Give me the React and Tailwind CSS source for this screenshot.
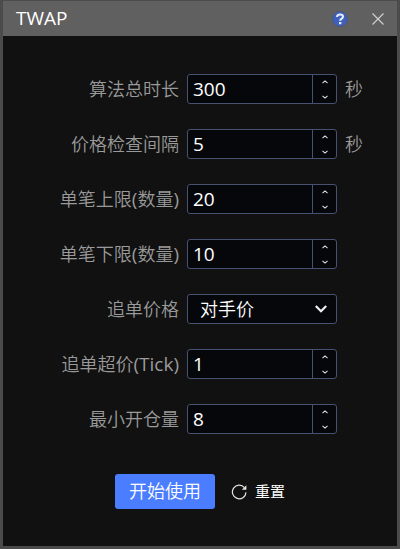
import { useState } from "react";

const fields = [
  { id: "duration", label: "算法总时长", value: 300, unit: "秒" },
  { id: "interval", label: "价格检查间隔", value: 5, unit: "秒" },
  { id: "maxQty", label: "单笔上限(数量)", value: 20 },
  { id: "minQty", label: "单笔下限(数量)", value: 10 },
  { id: "chasePrice", label: "追单价格", options: ["对手价", "最新价", "排队价"] },
  { id: "chaseTick", label: "追单超价(Tick)", value: 1 },
  { id: "minOpen", label: "最小开仓量", value: 8 },
];

const initialValues = Object.fromEntries(
  fields.map((f) => [f.id, f.options ? f.options[0] : f.value])
);

// Latin letters and brackets keep the regular weight, Chinese is set lighter
function LabelText({ text }) {
  return text.split(/([A-Za-z()]+)/).map((part, i) =>
    i % 2 ? (
      <span key={i} className="text-[19px] font-normal">
        {part}
      </span>
    ) : (
      part
    )
  );
}

function StepButton({ label, down, onClick }) {
  return (
    <button
      type="button"
      aria-label={label}
      onClick={onClick}
      className="flex flex-1 items-center justify-center text-[#e4e4e4]"
    >
      <svg className="h-1 w-1.5" viewBox="0 0 6 4" fill="none" stroke="currentColor" strokeWidth="1.1">
        <path d={down ? "M0.5 0.8 3 3.1 5.5 0.8" : "M0.5 3.2 3 0.9 5.5 3.2"} />
      </svg>
    </button>
  );
}

function NumberField({ id, value, onChange }) {
  return (
    <div className="flex h-[30px] overflow-hidden rounded-[3px] border border-[#475172] bg-[#05070b]">
      <input
        id={id}
        type="text"
        inputMode="numeric"
        value={value}
        onChange={(e) => onChange(Number(e.target.value) || 0)}
        className="min-w-0 flex-1 bg-transparent px-[5px] text-[19px] text-white outline-none"
      />
      <div className="flex w-6 flex-col gap-0.5 border-l border-[#475172]">
        <StepButton label="增加" onClick={() => onChange(value + 1)} />
        <StepButton label="减少" down onClick={() => onChange(Math.max(0, value - 1))} />
      </div>
    </div>
  );
}

function SelectField({ id, value, options, onChange }) {
  return (
    <div className="relative h-[30px]">
      <select
        id={id}
        value={value}
        onChange={(e) => onChange(e.target.value)}
        className="h-full w-full appearance-none rounded-[3px] border border-[#475172] bg-[#05070b] pr-8 pl-3 text-[18px] font-[350] text-white outline-none"
      >
        {options.map((o) => (
          <option key={o}>{o}</option>
        ))}
      </select>
      <svg
        className="pointer-events-none absolute top-[11px] right-[10px] h-2 w-3"
        viewBox="0 0 12 8"
        fill="none"
        stroke="#f0f0f0"
        strokeWidth="2.2"
      >
        <path d="M0.8 1 6 6.2 11.2 1" />
      </svg>
    </div>
  );
}

export default function App() {
  const [values, setValues] = useState(initialValues);

  const setValue = (id, value) => setValues((prev) => ({ ...prev, [id]: value }));

  return (
    <div className="min-h-screen border-x-[3px] border-t border-b-[3px] border-[#4b4b4b] bg-[#111111] font-['Open_Sans','Noto_Sans_CJK_SC',sans-serif]">
      {/* Title bar */}
      <header className="flex h-[35px] items-center bg-[#606060] pr-3 pl-[13px]">
        <h1 className="flex-1 pb-0.5 text-[19px] leading-6 text-white">TWAP</h1>
        <button type="button" aria-label="帮助" className="mr-[23px]">
          <svg className="h-4 w-4" viewBox="0 0 16 16">
            <circle cx="8" cy="8" r="7.5" fill="#3f61bb" stroke="#4a5578" strokeWidth="0.8" />
            <path
              d="M5 6.1C5 4.2 6.2 3.5 8 3.5s3 .8 3 2.3c0 1.9-2.8 1.7-2.8 3.9"
              fill="none"
              stroke="#e8ecf8"
              strokeWidth="2"
            />
            <rect x="7" y="11" width="2.4" height="2.2" fill="#e8ecf8" />
          </svg>
        </button>
        <button type="button" aria-label="关闭">
          <svg className="h-3.5 w-3.5" viewBox="0 0 14 14" fill="none" stroke="#d2d2d2" strokeWidth="1.1">
            <path d="M1.5 1.5 12.5 12.5M12.5 1.5 1.5 12.5" />
          </svg>
        </button>
      </header>

      <form
        className="pt-[38px] pb-9"
        onSubmit={(e) => e.preventDefault()}
        onReset={(e) => {
          e.preventDefault();
          setValues(initialValues);
        }}
      >
        <div className="flex flex-col gap-[25px]">
          {fields.map((f) => (
            <div key={f.id} className="grid h-[30px] grid-cols-[minmax(0,1fr)_150px_52px] items-center gap-2">
              <label
                htmlFor={f.id}
                className="text-right text-[18px] leading-[30px] font-[350] whitespace-nowrap text-[#9a9a9a]"
              >
                <LabelText text={f.label} />
              </label>
              {f.options ? (
                <SelectField
                  id={f.id}
                  options={f.options}
                  value={values[f.id]}
                  onChange={(v) => setValue(f.id, v)}
                />
              ) : (
                <NumberField id={f.id} value={values[f.id]} onChange={(v) => setValue(f.id, v)} />
              )}
              {f.unit && <span className="text-[18px] leading-[30px] font-[350] text-[#9a9a9a]">{f.unit}</span>}
            </div>
          ))}
        </div>

        {/* Actions */}
        <div className="mt-10 flex items-center justify-center gap-4">
          <button
            type="submit"
            className="h-[35px] w-[100px] rounded-[3px] bg-[#4a7dff] text-[18px] font-[350] text-white"
          >
            开始使用
          </button>
          <button type="reset" className="flex items-center gap-2 text-[15px] text-white">
            <svg className="h-4 w-4" viewBox="0 0 16 16" fill="none" stroke="#e6e6e6" strokeWidth="1.2">
              <path d="M13.4 3.6A6.8 6.8 0 1 0 15 8.4" />
              <path d="M15.4 1.2V5.8H10.8Z" fill="#e6e6e6" stroke="none" />
            </svg>
            重置
          </button>
        </div>
      </form>
    </div>
  );
}
